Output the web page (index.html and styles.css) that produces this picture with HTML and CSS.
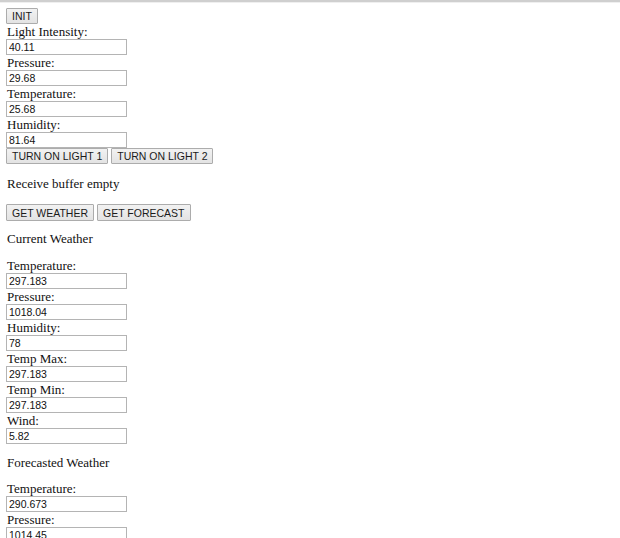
FILE: index.html
```html
<!DOCTYPE html>
<html>
<head>
<meta charset="utf-8">
<link rel="stylesheet" href="styles.css">
</head>
<body>
<div class="topline"></div>
<main class="page">
  <div class="btnrow"><button class="btn">INIT</button></div>
  <div class="field"><label class="lbl">Light Intensity:</label><input class="inp" value="40.11"></div>
  <div class="field"><label class="lbl">Pressure:</label><input class="inp" value="29.68"></div>
  <div class="field"><label class="lbl">Temperature:</label><input class="inp" value="25.68"></div>
  <div class="field"><label class="lbl">Humidity:</label><input class="inp" value="81.64"></div>
  <div class="btnrow"><button class="btn">TURN ON LIGHT 1</button><button class="btn">TURN ON LIGHT 2</button></div>
  <p class="msg">Receive buffer empty</p>
  <div class="btnrow tall"><button class="btn">GET WEATHER</button><button class="btn">GET FORECAST</button></div>
  <p class="heading">Current Weather</p>
  <div class="field"><label class="lbl">Temperature:</label><input class="inp" value="297.183"></div>
  <div class="field"><label class="lbl">Pressure:</label><input class="inp" value="1018.04"></div>
  <div class="field"><label class="lbl">Humidity:</label><input class="inp" value="78"></div>
  <div class="field"><label class="lbl">Temp Max:</label><input class="inp" value="297.183"></div>
  <div class="field"><label class="lbl">Temp Min:</label><input class="inp" value="297.183"></div>
  <div class="field"><label class="lbl">Wind:</label><input class="inp" value="5.82"></div>
  <p class="heading second">Forecasted Weather</p>
  <div class="field"><label class="lbl">Temperature:</label><input class="inp" value="290.673"></div>
  <div class="field"><label class="lbl">Pressure:</label><input class="inp" value="1014.45"></div>
</main>
</body>
</html>
```
FILE: styles.css
```css
html, body {
  margin: 0;
  padding: 0;
  background: #ffffff;
}
body {
  font-family: "Liberation Serif", "Times New Roman", serif;
  font-size: 13px;
  line-height: 15px;
  color: #111111;
  overflow: hidden;
}
.topline {
  height: 2px;
  background: #cfcfcf;
  border-bottom: 1px solid #efefef;
}
.page {
  padding: 5px 6px 0 6px;
}
.btnrow {
  display: flex;
  gap: 3px;
  height: 16px;
}
.btnrow.tall {
  height: 17px;
}
.btn {
  height: 100%;
  margin: 0;
  padding: 0 5px;
  border: 1px solid #acacac;
  border-radius: 1px;
  background: linear-gradient(#f2f2f2, #e3e3e3);
  font-family: "Liberation Sans", Arial, sans-serif;
  font-size: 10.5px;
  line-height: 14px;
  color: #1a1a1a;
}
.lbl {
  padding-left: 1px;
}
.field {
  display: flex;
  flex-direction: column;
  align-items: flex-start;
}
.lbl {
  display: block;
  height: 15px;
}
.inp {
  box-sizing: border-box;
  width: 121px;
  height: 16px;
  margin: 0;
  padding: 0 2px 0 2px;
  border: 1px solid #b4b4b4;
  font-family: "Liberation Sans", Arial, sans-serif;
  font-size: 10.5px;
  color: #111;
  background: #fff;
}
.msg {
  margin: 12px 0 13px 0;
  padding-left: 1px;
}
.heading {
  margin: 10px 0 12px 0;
  padding-left: 1px;
}
.heading.second {
  margin: 11px 0 11px 0;
}
```
